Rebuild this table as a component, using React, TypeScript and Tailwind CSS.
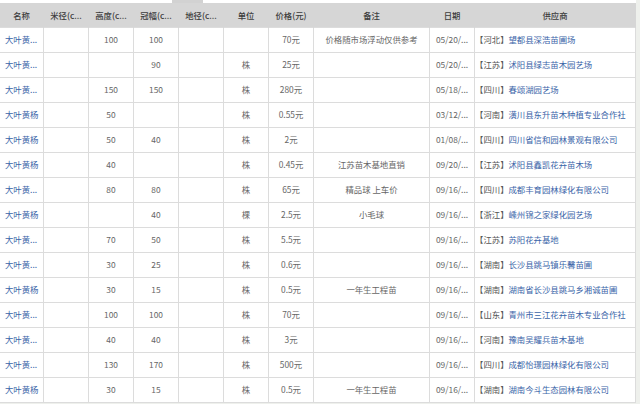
import React from 'react';

type Row = {
  name: string;
  mi: string;
  height: string;
  crown: string;
  ground: string;
  unit: string;
  price: string;
  note: string;
  date: string;
  prov: string;
  supplier: string;
};

const rows: Row[] = [
  { name: '大叶黄...', mi: '', height: '100', crown: '100', ground: '', unit: '', price: '70元', note: '价格随市场浮动仅供参考', date: '05/20/...', prov: '河北', supplier: '望都县深浩苗圃场' },
  { name: '大叶黄...', mi: '', height: '', crown: '90', ground: '', unit: '株', price: '25元', note: '', date: '05/20/...', prov: '江苏', supplier: '沭阳县绿志苗木园艺场' },
  { name: '大叶黄...', mi: '', height: '150', crown: '150', ground: '', unit: '株', price: '280元', note: '', date: '05/18/...', prov: '四川', supplier: '春颂湖园艺场' },
  { name: '大叶黄杨', mi: '', height: '50', crown: '', ground: '', unit: '株', price: '0.55元', note: '', date: '03/12/...', prov: '河南', supplier: '潢川县东升苗木种植专业合作社' },
  { name: '大叶黄杨', mi: '', height: '50', crown: '40', ground: '', unit: '株', price: '2元', note: '', date: '01/08/...', prov: '四川', supplier: '四川省信和园林景观有限公司' },
  { name: '大叶黄杨', mi: '', height: '40', crown: '', ground: '', unit: '株', price: '0.45元', note: '江苏苗木基地直销', date: '09/20/...', prov: '江苏', supplier: '沭阳县鑫凯花卉苗木场' },
  { name: '大叶黄...', mi: '', height: '80', crown: '80', ground: '', unit: '株', price: '65元', note: '精品球 上车价', date: '09/16/...', prov: '四川', supplier: '成都丰育园林绿化有限公司' },
  { name: '大叶黄杨', mi: '', height: '', crown: '40', ground: '', unit: '棵', price: '2.5元', note: '小毛球', date: '09/16/...', prov: '浙江', supplier: '嵊州锦之家绿化园艺场' },
  { name: '大叶黄...', mi: '', height: '70', crown: '50', ground: '', unit: '株', price: '5.5元', note: '', date: '09/16/...', prov: '江苏', supplier: '苏阳花卉基地' },
  { name: '大叶黄...', mi: '', height: '30', crown: '25', ground: '', unit: '株', price: '0.6元', note: '', date: '09/16/...', prov: '湖南', supplier: '长沙县跳马镇乐馨苗圃' },
  { name: '大叶黄杨', mi: '', height: '30', crown: '15', ground: '', unit: '株', price: '0.5元', note: '一年生工程苗', date: '09/16/...', prov: '湖南', supplier: '湖南省长沙县跳马乡湘诚苗圃' },
  { name: '大叶黄...', mi: '', height: '100', crown: '100', ground: '', unit: '株', price: '70元', note: '', date: '09/16/...', prov: '山东', supplier: '青州市三江花卉苗木专业合作社' },
  { name: '大叶黄...', mi: '', height: '40', crown: '40', ground: '', unit: '株', price: '3元', note: '', date: '09/16/...', prov: '河南', supplier: '豫南吴耀兵苗木基地' },
  { name: '大叶黄...', mi: '', height: '130', crown: '170', ground: '', unit: '株', price: '500元', note: '', date: '09/16/...', prov: '四川', supplier: '成都怡璟园林绿化有限公司' },
  { name: '大叶黄杨', mi: '', height: '30', crown: '15', ground: '', unit: '株', price: '0.5元', note: '一年生工程苗', date: '09/16/...', prov: '湖南', supplier: '湖南今斗生态园林有限公司' },
];

const headers = ['名称', '米径(c...', '高度(c...', '冠幅(c...', '地径(c...', '单位', '价格(元)', '备注', '日期', '供应商'];
const widths = ['w-[44px]', 'w-[45px]', 'w-[45px]', 'w-[45px]', 'w-[45px]', 'w-[45px]', 'w-[45px]', 'w-[116px]', 'w-[45px]', 'w-[161px]'];

const cell = 'border border-[#dcdcdc] text-center whitespace-nowrap overflow-hidden';

export default function App() {
  return (
    <div className="w-[640px] h-[404px] bg-[#eef0ec] overflow-hidden font-['Noto_Sans_CJK_SC','Microsoft_YaHei',sans-serif] text-[8.4px] leading-none">
      <div className="flex h-[3px] w-[636px] bg-white">
        <div className="ml-[172px] w-[31px] bg-[#d2d2d2]" />
      </div>
      <table className="table-fixed border-collapse w-[637px] -ml-px bg-white text-[#666]">
        <colgroup>
          {widths.map((w, i) => (
            <col key={i} className={w} />
          ))}
        </colgroup>
        <thead>
          <tr className="h-[24px] bg-[#d6d6d6] text-[#3c3c3c]">
            {headers.map((h) => (
              <th key={h} className="border-x border-[#d6d6d6] font-medium text-center whitespace-nowrap">
                {h}
              </th>
            ))}
          </tr>
        </thead>
        <tbody>
          {rows.map((r, i) => (
            <tr key={i} className="h-[25px]">
              <td className={`${cell} !text-left pl-[5px] text-[#3a64a8]`}>{r.name}</td>
              <td className={cell}>{r.mi}</td>
              <td className={cell}>{r.height}</td>
              <td className={cell}>{r.crown}</td>
              <td className={cell}>{r.ground}</td>
              <td className={cell}>{r.unit}</td>
              <td className={cell}>{r.price}</td>
              <td className={cell}>{r.note}</td>
              <td className={cell}>{r.date}</td>
              <td className={`${cell} !text-left`}>
                <span className="text-[#555]">【{r.prov}】</span>
                <span className="text-[#3a64a8]">{r.supplier}</span>
              </td>
            </tr>
          ))}
        </tbody>
      </table>
    </div>
  );
}
